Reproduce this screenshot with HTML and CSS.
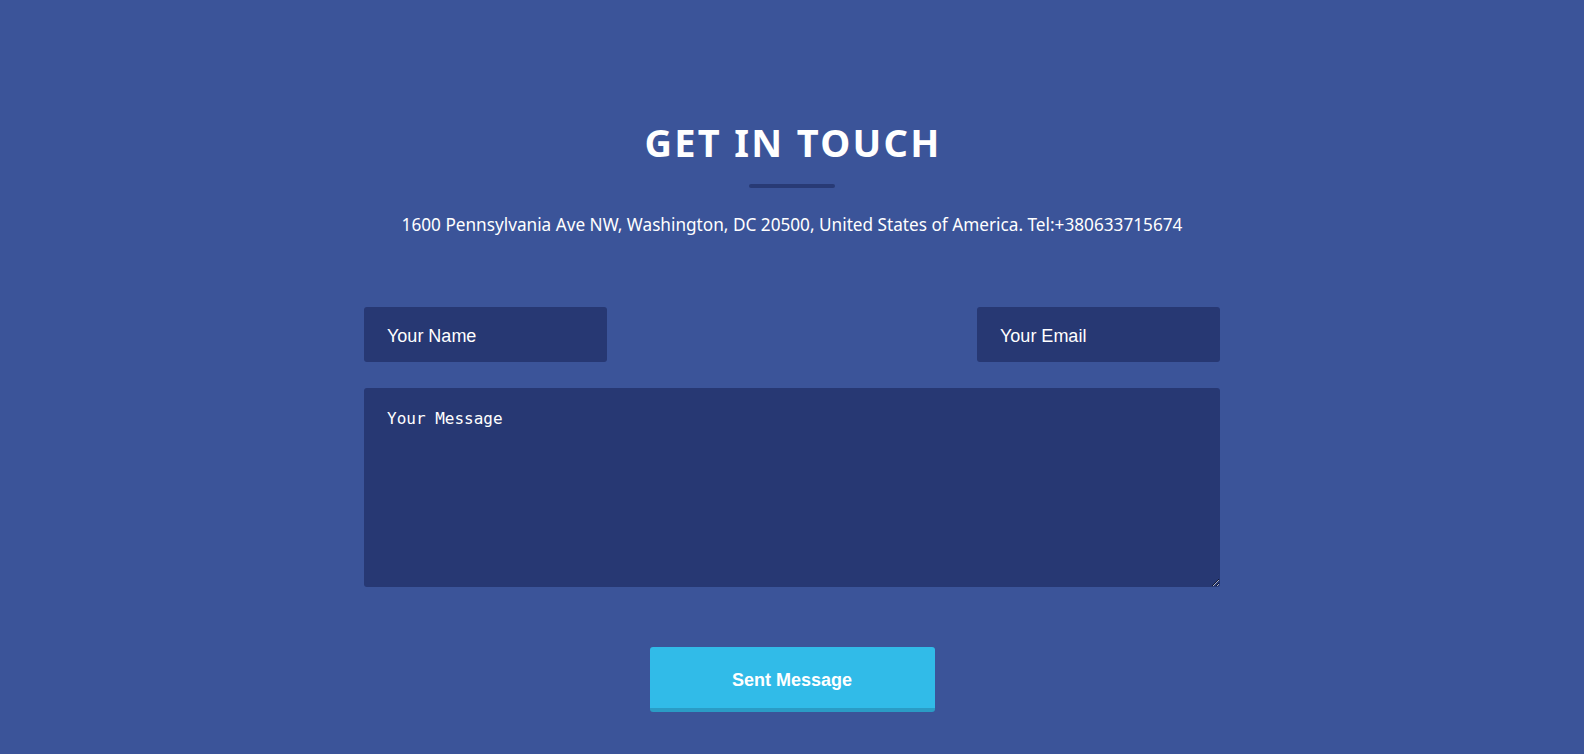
FILE: index.html
```html
<!DOCTYPE html>
<html>
<head lang="en">
    <meta charset="UTF-8">
    <title>Get in touch</title>
    <link rel="stylesheet" href="styles.css">
</head>
<body>
<div class="contact">
    <h2 class="title">GET IN TOUCH</h2>
    <div class="line"></div>
    <p class="address">1600 Pennsylvania Ave NW, Washington, DC 20500, United States of America. Tel:+380633715674</p>
    <form class="form">
        <div class="row">
            <input type="text" class="field" placeholder="Your Name">
            <input type="email" class="field" placeholder="Your Email">
        </div>
        <textarea class="message" placeholder="Your Message"></textarea>
        <div class="actions">
            <button type="button" class="btn">Sent Message</button>
        </div>
    </form>
</div>
</body>
</html>
```

FILE: styles.css
```css
* {
    margin: 0;
    padding: 0;
    box-sizing: border-box;
}

body {
    background-color: #3b5499;
    font-family: "Noto Sans", sans-serif;
    color: #fff;
}

.contact {
    width: 856px;
    margin: 0 auto;
    padding-top: 117px;
    text-align: center;
}

.title {
    font-size: 38px;
    font-weight: 700;
    letter-spacing: 2.3px;
    padding-left: 2px;
    line-height: 50px;
}

.line {
    width: 86px;
    height: 4px;
    background-color: #283a75;
    border-radius: 2px;
    margin: 17px auto 0;
}

.address {
    font-size: 17.2px;
    line-height: 24px;
    margin-top: 25px;
}

.form {
    margin-top: 70px;
}

.row {
    display: flex;
    justify-content: space-between;
}

.field,
.message {
    background-color: #273873;
    border: none;
    border-radius: 3px;
    color: #fff;
    outline: none;
}

.field {
    width: 243px;
    height: 55px;
    padding: 4px 22px 0 23px;
    font-family: "Liberation Sans", Arial, sans-serif;
    font-size: 18px;
}

.message {
    display: block;
    width: 856px;
    height: 199px;
    margin-top: 26px;
    padding: 21px 23px;
    font-family: "DejaVu Sans Mono", monospace;
    font-size: 16px;
}

.field::placeholder,
.message::placeholder {
    color: #fff;
    opacity: 1;
}

.actions {
    margin-top: 60px;
}

.btn {
    width: 285px;
    height: 65px;
    padding-top: 6px;
    background-color: #31bbe8;
    border: none;
    border-bottom: 4px solid #2a9cc6;
    border-radius: 3px;
    color: #fff;
    font-family: "Liberation Sans", Arial, sans-serif;
    font-size: 18px;
    font-weight: 700;
    cursor: pointer;
}
```
